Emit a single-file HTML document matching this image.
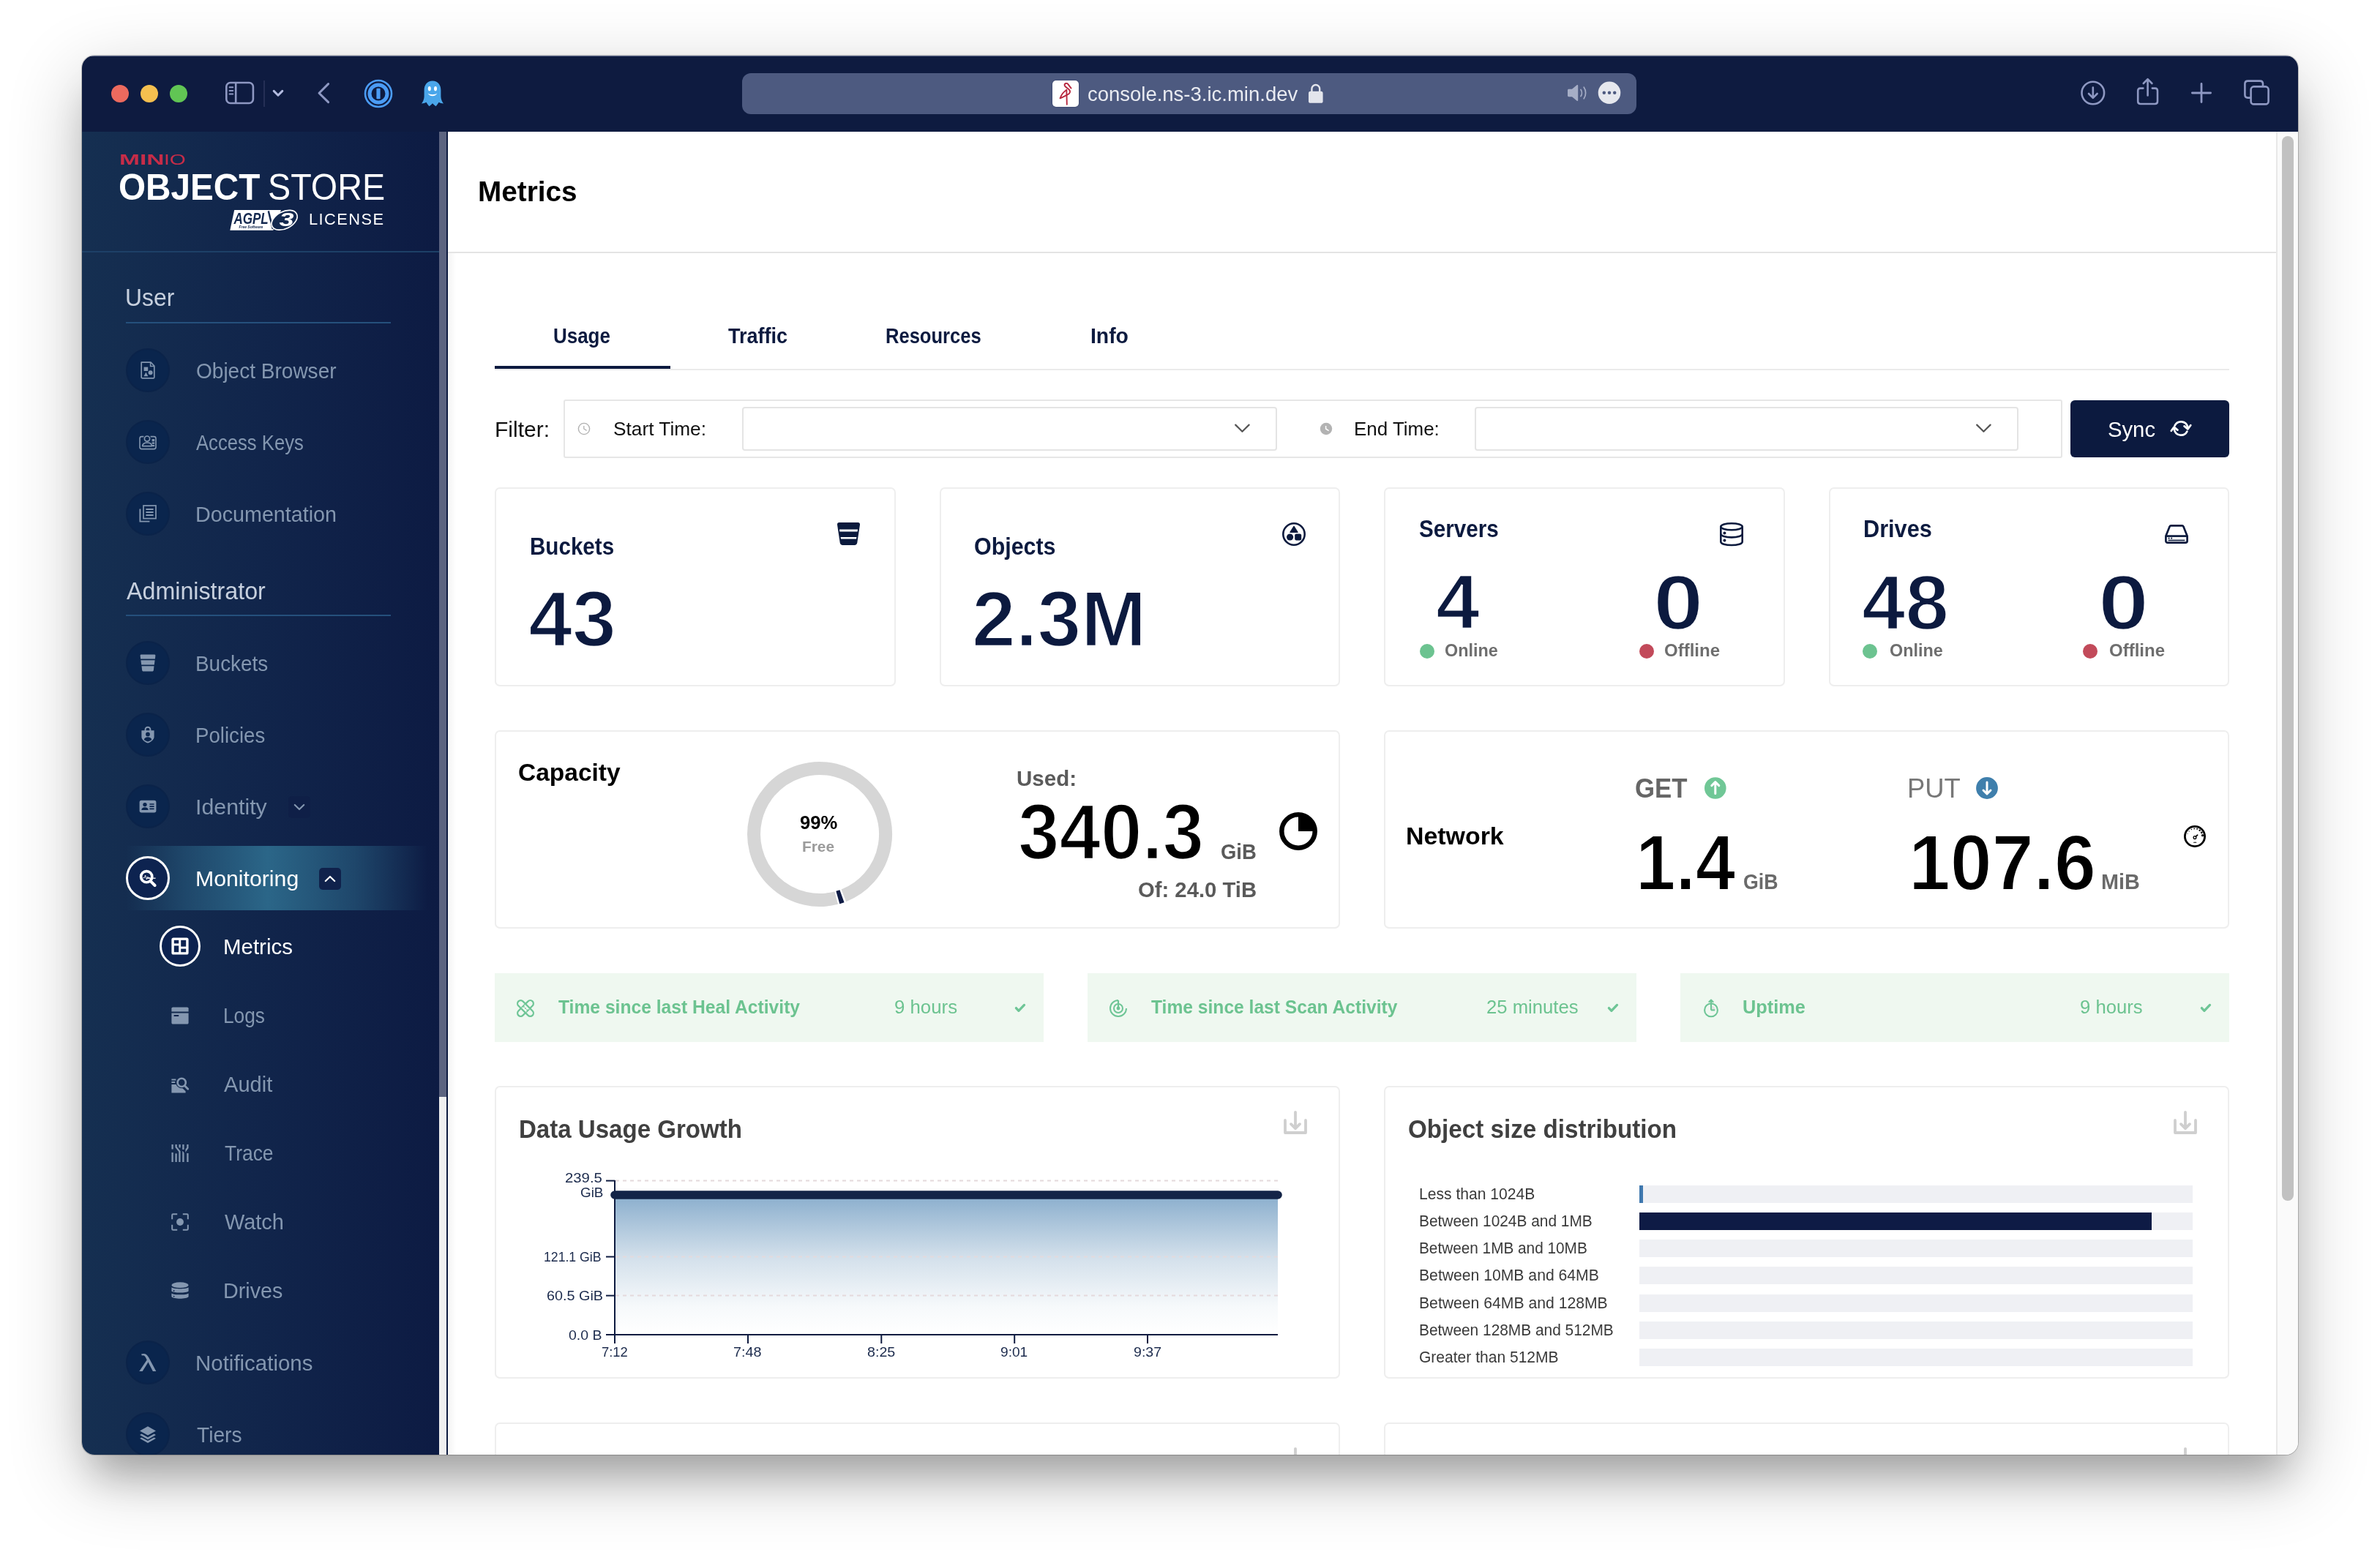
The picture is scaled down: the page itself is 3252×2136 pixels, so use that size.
<!DOCTYPE html>
<html lang="en"><head><meta charset="utf-8"><title>MinIO Console - Metrics</title>
<style>
html,body{margin:0;padding:0;background:#fff;}
body{width:3252px;height:2136px;position:relative;overflow:hidden;font-family:"Liberation Sans",sans-serif;}
.b{position:absolute;box-sizing:border-box;display:block;}
.t{position:absolute;white-space:nowrap;line-height:1em;height:1em;margin:0;padding:0;transform-origin:0 50%;}
#shadow{position:absolute;left:112px;top:76px;width:3028px;height:1912px;border-radius:17px;
 box-shadow:0 0 0 1px rgba(0,0,0,.2),0 30px 100px 0 rgba(0,0,0,.24),0 42px 52px -16px rgba(0,0,0,.22);background:#fff;}
#win{will-change:transform;position:absolute;left:0;top:0;width:3252px;height:2136px;clip-path:inset(76px 112px 148px 112px round 17px);background:#fff;}
svg{overflow:visible}
</style></head><body>
<div id="shadow"></div>
<div id="win">
<div class="b" style="left:112px;top:76px;width:3028px;height:104px;background:#0e1b40;"></div>
<div class="b" style="left:112px;top:76px;width:3028px;height:1px;background:rgba(200,208,235,.5);"></div>
<div class="b" style="left:152px;top:116px;width:24px;height:24px;background:#ec6a5e;border-radius:50%;"></div>
<div class="b" style="left:192px;top:116px;width:24px;height:24px;background:#f4bf4f;border-radius:50%;"></div>
<div class="b" style="left:232px;top:116px;width:24px;height:24px;background:#61c554;border-radius:50%;"></div>
<div class="b" style="left:1014px;top:100px;width:1222px;height:56px;background:#4d5a80;border-radius:12px;"></div>
<div class="b" style="left:1438px;top:110px;width:36px;height:36px;background:#fff;border-radius:5px;box-shadow:0 0 2px rgba(20,30,70,.6);"></div>
<div class="t" style="left:1485.90px;top:114.92px;font-size:27.50px;color:#e9ebf1;">console.ns-3.ic.min.dev</div>
<svg class="b" style="left:306px;top:108px;" width="44" height="38" viewBox="0 0 44 38"><g fill="none" stroke="#8e98c2" stroke-width="2.6" stroke-linecap="round"><rect x="3.3" y="5" width="36.6" height="28" rx="5.5"/><path d="M16.2 5.5V32.5"/><path d="M7.6 11.3h4.6M7.6 16h4.6M7.6 20.6h4.6" stroke-width="2"/></g></svg>
<div class="b" style="left:360px;top:110px;width:2px;height:36px;background:#252f55;"></div>
<svg class="b" style="left:370px;top:118px;" width="20" height="18" viewBox="0 0 20 18"><path d="M4.2 6.4L10 12.2L15.8 6.4" fill="none" stroke="#b3bbe0" stroke-width="3" stroke-linecap="round" stroke-linejoin="round"/></svg>
<svg class="b" style="left:430px;top:108px;" width="26" height="38" viewBox="0 0 26 38"><path d="M18.6 6.6L6 19.2L18.6 31.6" fill="none" stroke="#8e98c2" stroke-width="3" stroke-linecap="round" stroke-linejoin="round"/></svg>
<svg class="b" style="left:497px;top:108px;" width="40" height="40" viewBox="0 0 40 40"><g transform="translate(20,20)"><circle r="18" fill="none" stroke="#4b9cf5" stroke-width="2.6"/><circle r="12" fill="none" stroke="#4b9cf5" stroke-width="5"/><rect x="-2.6" y="-7.2" width="5.2" height="14.4" rx="1" fill="#4b9cf5"/></g></svg>
<svg class="b" style="left:574px;top:108px;" width="34" height="40" viewBox="0 0 34 40"><path d="M17 2.4C9.6 2.4 5.6 8 5.6 15.4V24C5.6 28 3.6 31.2 2 33.6C4.4 33.4 6.6 32.8 8.4 31.8C9.6 33.8 10.8 35.4 12.4 37.2C14 36 15.4 34.8 17 33.2C18.6 34.8 20 36 21.6 37.2C23.2 35.4 24.4 33.8 25.6 31.8C27.4 32.8 29.6 33.4 32 33.6C30.4 31.2 28.4 28 28.4 24V15.4C28.4 8 24.4 2.4 17 2.4Z" fill="#4aa6ea"/><ellipse cx="12.8" cy="13.2" rx="2" ry="3.1" fill="#fff"/><ellipse cx="21" cy="13.2" rx="2" ry="3.1" fill="#fff"/><path d="M10.6 19.6C12.6 24.4 21.4 24.4 23.4 19.6C20.6 21.8 13.4 21.8 10.6 19.6Z" fill="#fff"/></svg>
<svg class="b" style="left:1438px;top:110px;" width="36" height="36" viewBox="0 0 36 36"><g fill="none" stroke="#b7283f" stroke-width="1.9" stroke-linecap="round" stroke-linejoin="round"><path d="M25.6 10.6L21.2 4.9C19.8 3.1 16.4 3.9 16.6 6.3C16.8 8.4 20 10 22.6 12.2C25.2 14.6 24.4 18.2 20 19.6"/><path d="M19.3 13C15 15.5 12 20 10.5 24.3C13.6 23.1 16.6 21.4 19.6 19.8"/><path d="M19.3 12.8L19.8 32.8"/></g></svg>
<svg class="b" style="left:1786px;top:112px;" width="24" height="32" viewBox="0 0 24 32"><rect x="2" y="12.8" width="19.6" height="16" rx="2.6" fill="#e3e5ec"/><path d="M6.4 13.5V9.4a5.4 5.4 0 0 1 10.8 0V13.5" fill="none" stroke="#e3e5ec" stroke-width="2.4"/></svg>
<svg class="b" style="left:2140px;top:112px;" width="32" height="30" viewBox="0 0 32 30"><path d="M2 11.4C2 10.4 2.6 9.8 3.6 9.8H8L14.6 4.2C15.4 3.6 16.2 4 16.2 5V25C16.2 26 15.4 26.4 14.6 25.8L8 20.2H3.6C2.6 20.2 2 19.6 2 18.6Z" fill="#a6aec6"/><path d="M20 10.4C21.8 13 21.8 17 20 19.6" fill="none" stroke="#a6aec6" stroke-width="1.7" stroke-linecap="round"/><path d="M24.2 7.2C27.4 11.6 27.4 18.4 24.2 22.8" fill="none" stroke="#a6aec6" stroke-width="1.7" stroke-linecap="round"/></svg>
<svg class="b" style="left:2183px;top:111px;" width="32" height="32" viewBox="0 0 32 32"><circle cx="16" cy="15.7" r="15.3" fill="#e6e8ee"/><circle cx="8.8" cy="15.7" r="2.25" fill="#4d5a80"/><circle cx="16" cy="15.7" r="2.25" fill="#4d5a80"/><circle cx="23.2" cy="15.7" r="2.25" fill="#4d5a80"/></svg>
<svg class="b" style="left:2840px;top:108px;" width="40" height="40" viewBox="0 0 40 40"><g fill="none" stroke="#8e98c2" stroke-width="2.6" stroke-linecap="round" stroke-linejoin="round"><circle cx="19.8" cy="19" r="15.3"/><path d="M19.8 11.6V25.4M14 20L19.8 25.8L25.6 20"/></g></svg>
<svg class="b" style="left:2916px;top:104px;" width="38" height="44" viewBox="0 0 38 44"><g fill="none" stroke="#8e98c2" stroke-width="2.6" stroke-linecap="round" stroke-linejoin="round"><path d="M12.4 16.6H8.6C6.4 16.6 5.2 17.8 5.2 20V34.6C5.2 36.8 6.4 38 8.6 38H28.6C30.8 38 32 36.8 32 34.6V20C32 17.8 30.8 16.6 28.6 16.6H24.8"/><path d="M18.6 26.4V4.4M12.8 10L18.6 4.2L24.4 10"/></g></svg>
<svg class="b" style="left:2990px;top:110px;" width="36" height="36" viewBox="0 0 36 36"><path d="M18 4.4V29.6M5.4 17H30.6" fill="none" stroke="#8e98c2" stroke-width="2.8" stroke-linecap="round"/></svg>
<svg class="b" style="left:3062px;top:106px;" width="44" height="42" viewBox="0 0 44 42"><g fill="none" stroke="#8e98c2" stroke-width="2.6" stroke-linejoin="round"><path d="M13.6 27.6H9.4C7 27.6 5.4 26 5.4 23.6V8.6C5.4 6.2 7 4.6 9.4 4.6H26C28.4 4.6 30 6.2 30 8.6V12.4"/><rect x="13.6" y="12.4" width="24" height="24" rx="4"/></g></svg>
<div class="b" style="left:112px;top:180px;width:488px;height:1808px;background:linear-gradient(90deg,#152f51 0%,#11254b 50%,#0d1b43 100%);"></div>
<div class="b" style="left:112px;top:343px;width:488px;height:2px;background:#1d4067;"></div>
<div class="b" style="left:600px;top:180px;width:10px;height:1808px;background:#f0f0f0;"></div>
<div class="b" style="left:600px;top:180px;width:10px;height:1319px;background:#5c6480;"></div>
<div class="b" style="left:610px;top:180px;width:2px;height:1808px;background:#0e1b40;"></div>
<div class="t" style="left:163.42px;top:207.67px;font-size:20.00px;color:#c72c48;font-weight:700;transform:scaleX(1.6765);">MIN</div>
<div class="t" style="left:223.96px;top:207.67px;font-size:20.00px;color:#c72c48;transform:scaleX(1.4130);">IO</div>
<div class="t" style="left:162.49px;top:231.40px;font-size:49.50px;color:#fff;font-weight:700;transform:scaleX(0.9634);">OBJECT</div>
<div class="t" style="left:365.90px;top:231.40px;font-size:49.50px;color:#fff;transform:scaleX(0.9436);">STORE</div>
<div class="t" style="left:421.96px;top:288.55px;font-size:21.80px;color:#fff;letter-spacing:1.487px;">LICENSE</div>
<svg class="b" style="left:312px;top:284px;" width="96" height="34" viewBox="0 0 96 34"><path d="M8.2 3.1H72L61.2 30.8H2.3Z" fill="#fff"/><text x="7.4" y="22.3" font-family="Liberation Sans, sans-serif" font-style="italic" font-weight="700" font-size="22" fill="#14294f" textLength="47.4" lengthAdjust="spacingAndGlyphs">AGPL</text><text x="14.4" y="28.3" font-family="Liberation Sans, sans-serif" font-style="italic" font-weight="700" font-size="5.4" fill="#14294f" textLength="33" lengthAdjust="spacingAndGlyphs">Free Software</text><path d="M54.8 4.4L60.8 29" fill="none" stroke="#14294f" stroke-width="2.4"/><g transform="translate(76.6,16.8) rotate(-27)"><ellipse rx="18.8" ry="11.6" fill="#14294f" stroke="#fff" stroke-width="1.7"/></g><text x="69.4" y="25.4" font-family="Liberation Sans, sans-serif" font-style="italic" font-weight="700" font-size="25" fill="#fff" textLength="20" lengthAdjust="spacingAndGlyphs">3</text></svg>
<div class="t" style="left:170.61px;top:390.37px;font-size:33.00px;color:#c7d0de;transform:scaleX(0.9652);">User</div>
<div class="b" style="left:172px;top:440px;width:362px;height:2px;background:#25507c;"></div>
<div class="t" style="left:173.00px;top:790.77px;font-size:33.00px;color:#c7d0de;transform:scaleX(0.9766);">Administrator</div>
<div class="b" style="left:172px;top:840px;width:362px;height:2px;background:#25507c;"></div>
<div class="b" style="left:172px;top:476px;width:60px;height:60px;background:#0a254d;border:2px solid #0b2349;border-radius:50%;"></div>
<svg class="b" style="left:190px;top:494px;" width="24" height="24" viewBox="0 0 24 24"><path d="M3.2 1.2H16L20.8 6V21.4C20.8 22.2 20.2 22.8 19.4 22.8H4.6C3.8 22.8 3.2 22.2 3.2 21.4Z" fill="none" stroke="#8497b0" stroke-width="1.7" stroke-linejoin="round"/><path d="M15.6 1.6V6.4H20.4" fill="none" stroke="#8497b0" stroke-width="1.5"/><rect x="6.6" y="7.6" width="5.6" height="5.4" fill="#8497b0"/><circle cx="15.6" cy="15.2" r="3" fill="#8497b0"/><path d="M6.4 20.2L9.4 14.8L12.4 20.2Z" fill="#8497b0"/></svg>
<div class="t" style="left:268.24px;top:491.90px;font-size:30.00px;color:#8497b0;transform:scaleX(0.9341);">Object Browser</div>
<div class="b" style="left:172px;top:574px;width:60px;height:60px;background:#0a254d;border:2px solid #0b2349;border-radius:50%;"></div>
<svg class="b" style="left:190px;top:592px;" width="24" height="24" viewBox="0 0 24 24"><path d="M6.4 4.6H3.6C2 4.6 1 5.6 1 7.2V19C1 20.6 2 21.6 3.6 21.6H20.4C22 21.6 23 20.6 23 19V7.2C23 5.6 22 4.6 20.4 4.6H15.6" fill="none" stroke="#8497b0" stroke-width="1.6"/><circle cx="11" cy="7.6" r="3.6" fill="none" stroke="#8497b0" stroke-width="1.7"/><path d="M4.6 17.6C4.6 14.8 7.2 13 11 13C14.8 13 17.4 14.8 17.4 17.6Z" fill="none" stroke="#8497b0" stroke-width="1.6" stroke-linejoin="round"/><rect x="17.6" y="8" width="3.6" height="3.2" fill="#8497b0"/><rect x="17.6" y="12.4" width="3.6" height="2.4" fill="#8497b0"/><rect x="17.6" y="16" width="3.6" height="2.2" fill="#8497b0"/></svg>
<div class="t" style="left:268.20px;top:589.90px;font-size:30.00px;color:#8497b0;transform:scaleX(0.8553);">Access Keys</div>
<div class="b" style="left:172px;top:672px;width:60px;height:60px;background:#0a254d;border:2px solid #0b2349;border-radius:50%;"></div>
<svg class="b" style="left:190px;top:690px;" width="24" height="24" viewBox="0 0 24 24"><rect x="6" y="1" width="17" height="17.6" fill="none" stroke="#8497b0" stroke-width="1.7"/><path d="M9.4 6H19.6M9.4 10H19.6M9.4 14H19.6" stroke="#8497b0" stroke-width="1.8"/><path d="M1.4 5.6V22.6H14.4" fill="none" stroke="#8497b0" stroke-width="1.9"/></svg>
<div class="t" style="left:267.20px;top:687.90px;font-size:30.00px;color:#8497b0;transform:scaleX(0.9567);">Documentation</div>
<div class="b" style="left:172px;top:876px;width:60px;height:60px;background:#0a254d;border:2px solid #0b2349;border-radius:50%;"></div>
<svg class="b" style="left:190px;top:894px;" width="24" height="24" viewBox="0 0 24 24"><path d="M1.6 1.8C1.6 1 2.2 0.4 3 0.4H21C21.8 0.4 22.4 1 22.4 1.8L21.9 6.4H2.1Z" fill="#8497b0"/><path d="M2.4 8.2H21.6L20.8 14.4H3.2Z" fill="#8497b0"/><path d="M3.5 16.2H20.5L19.9 21.8C19.8 22.8 19 23.6 17.9 23.6H6.1C5 23.6 4.2 22.8 4.1 21.8Z" fill="#8497b0"/></svg>
<div class="t" style="left:267.27px;top:891.90px;font-size:30.00px;color:#8497b0;transform:scaleX(0.9302);">Buckets</div>
<div class="b" style="left:172px;top:974px;width:60px;height:60px;background:#0a254d;border:2px solid #0b2349;border-radius:50%;"></div>
<svg class="b" style="left:190px;top:992px;" width="24" height="24" viewBox="0 0 24 24"><path d="M12 0.8C14.6 0.8 16.4 2.6 16.4 5V6.2H20.6V15C20.6 19 16 22 12 23.6C8 22 3.4 19 3.4 15V6.2H7.6V5C7.6 2.6 9.4 0.8 12 0.8ZM9.6 6.2H14.4V5C14.4 3.6 13.4 2.8 12 2.8C10.6 2.8 9.6 3.6 9.6 5Z" fill="#8497b0"/><circle cx="12" cy="11.4" r="2.9" fill="#0a254d"/><path d="M6.8 19C7.2 16.4 9.2 15.2 12 15.2C14.8 15.2 16.8 16.4 17.2 19C15.6 20.2 13.8 21 12 21.6C10.2 21 8.4 20.2 6.8 19Z" fill="#0a254d"/></svg>
<div class="t" style="left:267.29px;top:989.90px;font-size:30.00px;color:#8497b0;transform:scaleX(0.9209);">Policies</div>
<div class="b" style="left:172px;top:1072px;width:60px;height:60px;background:#0a254d;border:2px solid #0b2349;border-radius:50%;"></div>
<svg class="b" style="left:190px;top:1090px;" width="24" height="24" viewBox="0 0 24 24"><rect x="0.6" y="3.8" width="22.8" height="16.6" rx="2.6" fill="#8497b0"/><circle cx="8" cy="9.6" r="2.7" fill="#0a254d"/><path d="M3.4 17C3.4 14.4 5.2 13.2 8 13.2C10.8 13.2 12.6 14.4 12.6 17Z" fill="#0a254d"/><path d="M14.4 9H20.6M14.4 12.2H20.6M14.4 15.4H20.6" stroke="#0a254d" stroke-width="1.7"/></svg>
<div class="t" style="left:266.77px;top:1087.90px;font-size:30.00px;color:#8497b0;transform:scaleX(1.0101);">Identity</div>
<div class="b" style="left:172px;top:1156px;width:412px;height:88px;background:linear-gradient(90deg,rgba(43,102,136,0) 0%,rgba(43,102,136,.5) 20%,rgba(43,102,136,1) 47%,rgba(43,102,136,.55) 76%,rgba(43,102,136,0) 100%);"></div>
<div class="b" style="left:172px;top:1170px;width:60px;height:60px;background:#0d2350;border:3px solid #fff;border-radius:50%;"></div>
<svg class="b" style="left:190px;top:1188px;" width="24" height="24" viewBox="0 0 24 24"><circle cx="10.2" cy="10.2" r="7.6" fill="none" stroke="#fff" stroke-width="3.6"/><path d="M15.4 15.8L21.6 22" stroke="#fff" stroke-width="4" stroke-linecap="round"/><path d="M11 12.2H22.6" stroke="#fff" stroke-width="1.3"/><path d="M5.4 11.6H7.4L8.6 8L10.4 14L11.8 10L12.6 11.6H15" fill="none" stroke="#fff" stroke-width="0.9"/></svg>
<div class="t" style="left:267.08px;top:1185.90px;font-size:30.00px;color:#fff;transform:scaleX(1.0081);">Monitoring</div>
<div class="b" style="left:172px;top:1832px;width:60px;height:60px;background:#0a254d;border:2px solid #0b2349;border-radius:50%;"></div>
<div class="t" style="left:190.26px;top:1846.69px;font-size:32.50px;color:#8497b0;transform:scaleX(1.4592);">λ</div>
<div class="t" style="left:267.14px;top:1847.90px;font-size:30.00px;color:#8497b0;transform:scaleX(0.9819);">Notifications</div>
<div class="b" style="left:172px;top:1930px;width:60px;height:60px;background:#0a254d;border:2px solid #0b2349;border-radius:50%;"></div>
<svg class="b" style="left:190px;top:1948px;" width="24" height="24" viewBox="0 0 24 24"><path d="M12 1.2L23 7.4L12 13.6L1 7.4Z" fill="#8497b0"/><path d="M3.6 11.6L1 13L12 19.2L23 13L20.4 11.6L12 16.2Z" fill="#8497b0"/><path d="M3.6 16.4L1 17.8L12 24L23 17.8L20.4 16.4L12 21Z" fill="#8497b0"/></svg>
<div class="t" style="left:268.94px;top:1945.90px;font-size:30.00px;color:#8497b0;transform:scaleX(0.9390);">Tiers</div>
<div class="b" style="left:394px;top:1088px;width:30px;height:30px;background:#0f1f47;border-radius:5px;"></div>
<svg class="b" style="left:394px;top:1088px;" width="30" height="30" viewBox="0 0 30 30"><path d="M8.8 12L15 18L21.2 12" fill="none" stroke="#8497b0" stroke-width="2.2" stroke-linecap="round" stroke-linejoin="round"/></svg>
<div class="b" style="left:436px;top:1186px;width:30px;height:30px;background:#10224c;border-radius:5px;"></div>
<svg class="b" style="left:436px;top:1186px;" width="30" height="30" viewBox="0 0 30 30"><path d="M8.8 18L15 12L21.2 18" fill="none" stroke="#fff" stroke-width="2.2" stroke-linecap="round" stroke-linejoin="round"/></svg>
<div class="b" style="left:218px;top:1265px;width:56px;height:56px;background:#0c2250;border:3px solid #fff;border-radius:50%;"></div>
<svg class="b" style="left:234px;top:1281px;" width="24" height="24" viewBox="0 0 24 24"><rect x="0.4" y="0.4" width="23.2" height="23.2" rx="2.6" fill="#fff"/><rect x="3.8" y="3.8" width="6.4" height="4.6" fill="#0c2250"/><rect x="3.8" y="11.4" width="6.4" height="8.8" fill="#0c2250"/><rect x="13.2" y="3.8" width="7" height="8.8" fill="#0c2250"/><rect x="13.2" y="15.6" width="7" height="4.6" fill="#0c2250"/></svg>
<div class="t" style="left:305.14px;top:1278.90px;font-size:30.00px;color:#fff;transform:scaleX(0.9823);">Metrics</div>
<svg class="b" style="left:234px;top:1376px;" width="24" height="24" viewBox="0 0 24 24"><path d="M0.4 2.2C0.4 1.2 1.2 0.4 2.2 0.4H21.8C22.8 0.4 23.6 1.2 23.6 2.2V6.6H0.4Z" fill="#8497b0"/><path d="M0.4 8.4H23.6V21.8C23.6 22.8 22.8 23.6 21.8 23.6H2.2C1.2 23.6 0.4 22.8 0.4 21.8Z" fill="#8497b0"/><rect x="3.6" y="11" width="6.6" height="2" fill="#10244c"/></svg>
<div class="t" style="left:305.40px;top:1372.90px;font-size:30.00px;color:#8497b0;transform:scaleX(0.8759);">Logs</div>
<svg class="b" style="left:234px;top:1470.5px;" width="24" height="24.0" viewBox="0 0 24 24.0"><path d="M0.4 3.4H6.4V5.4H0.4ZM0.4 7H5.2V9H0.4Z" fill="#8497b0"/><path d="M0.4 11H6.6C8 14.6 11.4 16.6 15.4 16.2L19.6 20.2V22.6H0.4Z" fill="#8497b0"/><circle cx="14.2" cy="8.4" r="5.6" fill="none" stroke="#8497b0" stroke-width="2.6"/><path d="M18.6 13L22.8 17.2" stroke="#8497b0" stroke-width="2.8" stroke-linecap="round"/></svg>
<div class="t" style="left:305.90px;top:1467.40px;font-size:30.00px;color:#8497b0;transform:scaleX(0.9692);">Audit</div>
<svg class="b" style="left:234px;top:1564px;" width="24" height="24" viewBox="0 0 24 24"><g fill="none" stroke="#8497b0" stroke-width="2.3"><path d="M1.6 0V6.4M1.6 11V24"/><path d="M6.6 0V3.6L11.4 9.6V24"/><path d="M6.6 12.4V24"/><path d="M11.6 0V4.4"/><path d="M16.4 0V6.2L16.4 24" /><path d="M22.4 0V4.6L18.4 10"/><path d="M22.4 12V24"/></g><path d="M13.4 7L19.4 7L19.4 13Z" fill="#10244c" stroke="none"/></svg>
<div class="t" style="left:306.97px;top:1560.90px;font-size:30.00px;color:#8497b0;transform:scaleX(0.8808);">Trace</div>
<svg class="b" style="left:234px;top:1658px;" width="24" height="24" viewBox="0 0 24 24"><g fill="none" stroke="#8497b0" stroke-width="2"><path d="M1.2 8.2V2.6C1.2 1.8 1.8 1.2 2.6 1.2H8.2M15.8 1.2H21.4C22.2 1.2 22.8 1.8 22.8 2.6V8.2M22.8 15.8V21.4C22.8 22.2 22.2 22.8 21.4 22.8H15.8M8.2 22.8H2.6C1.8 22.8 1.2 22.2 1.2 21.4V15.8"/></g><circle cx="12" cy="12" r="4.9" fill="#8497b0"/></svg>
<div class="t" style="left:307.36px;top:1654.90px;font-size:30.00px;color:#8497b0;transform:scaleX(0.9646);">Watch</div>
<svg class="b" style="left:234px;top:1752px;" width="24" height="24" viewBox="0 0 24 24"><ellipse cx="12" cy="4.2" rx="11.6" ry="3.9" fill="#8497b0"/><path d="M0.4 7.2C3 9.8 21 9.8 23.6 7.2V12.4C21 15.2 3 15.2 0.4 12.4Z" fill="#8497b0"/><path d="M0.4 15.4C3 18 21 18 23.6 15.4V20C21 23.6 3 23.6 0.4 20Z" fill="#8497b0"/><circle cx="3.6" cy="12" r="0.9" fill="#10244c"/><circle cx="3.6" cy="19.6" r="0.9" fill="#10244c"/></svg>
<div class="t" style="left:305.21px;top:1748.90px;font-size:30.00px;color:#8497b0;transform:scaleX(0.9559);">Drives</div>
<div class="b" style="left:612px;top:180px;width:2498px;height:1808px;background:#fff;"></div>
<div class="b" style="left:3110px;top:180px;width:30px;height:1808px;background:#fafafa;border-left:2px solid #e8e8e8;"></div>
<div class="b" style="left:3118px;top:186px;width:16px;height:1455px;background:#c1c1c1;border-radius:8px;"></div>
<div class="t" style="left:653.28px;top:243.03px;font-size:38.00px;color:#000;font-weight:700;transform:scaleX(1.0185);">Metrics</div>
<div class="b" style="left:612px;top:344px;width:2498px;height:2px;background:#e4e4e4;"></div>
<div class="b" style="left:612px;top:346px;width:12px;height:1642px;background:linear-gradient(90deg,rgba(0,0,0,.045),rgba(0,0,0,0));"></div>
<div class="b" style="left:676px;top:504px;width:2370px;height:2px;background:#ebebeb;"></div>
<div class="b" style="left:676px;top:500px;width:240px;height:4px;background:#0c1a3f;"></div>
<div class="t" style="left:756.19px;top:443.61px;font-size:30.00px;color:#0c1a3f;font-weight:700;transform:scaleX(0.8648);">Usage</div>
<div class="t" style="left:995.03px;top:443.61px;font-size:30.00px;color:#0c1a3f;font-weight:700;transform:scaleX(0.9009);">Traffic</div>
<div class="t" style="left:1209.94px;top:443.61px;font-size:30.00px;color:#0c1a3f;font-weight:700;transform:scaleX(0.8516);">Resources</div>
<div class="t" style="left:1489.66px;top:443.61px;font-size:30.00px;color:#0c1a3f;font-weight:700;transform:scaleX(0.9441);">Info</div>
<div class="t" style="left:675.60px;top:571.77px;font-size:29.80px;color:#111;transform:scaleX(1.0082);">Filter:</div>
<div class="b" style="left:770px;top:546px;width:2048px;height:80px;border:2px solid #e6e6e6;border-radius:3px;"></div>
<div class="t" style="left:837.82px;top:573.61px;font-size:25.50px;color:#111;transform:scaleX(1.0305);">Start Time:</div>
<div class="b" style="left:1014px;top:556px;width:731px;height:60px;border:2px solid #e4e4e4;border-radius:4px;"></div>
<div class="t" style="left:1849.92px;top:573.61px;font-size:25.50px;color:#111;transform:scaleX(1.0177);">End Time:</div>
<div class="b" style="left:2015px;top:556px;width:743px;height:60px;border:2px solid #e4e4e4;border-radius:4px;"></div>
<div class="b" style="left:2829px;top:547px;width:217px;height:78px;background:#0c1a3f;border-radius:6px;"></div>
<div class="t" style="left:2880.18px;top:572.03px;font-size:29.50px;color:#fff;transform:scaleX(0.9910);">Sync</div>
<div class="b" style="left:676px;top:666px;width:548px;height:272px;border:2px solid #eeeeee;border-radius:7px;background:#fff;"></div>
<div class="b" style="left:1284px;top:666px;width:547px;height:272px;border:2px solid #eeeeee;border-radius:7px;background:#fff;"></div>
<div class="b" style="left:1891px;top:666px;width:548px;height:272px;border:2px solid #eeeeee;border-radius:7px;background:#fff;"></div>
<div class="b" style="left:2499px;top:666px;width:547px;height:272px;border:2px solid #eeeeee;border-radius:7px;background:#fff;"></div>
<div class="t" style="left:723.68px;top:729.64px;font-size:33.50px;color:#0c1a3f;font-weight:700;transform:scaleX(0.8833);">Buckets</div>
<div class="t" style="left:722.18px;top:792.60px;font-size:107.50px;color:#0c1a3f;font-weight:700;-webkit-text-stroke:2.4px #fff;">43</div>
<div class="t" style="left:1331.28px;top:729.64px;font-size:33.50px;color:#0c1a3f;font-weight:700;transform:scaleX(0.9076);">Objects</div>
<div class="t" style="left:1328.05px;top:792.60px;font-size:107.50px;color:#0c1a3f;font-weight:700;transform:scaleX(0.9978);-webkit-text-stroke:2.4px #fff;">2.3M</div>
<div class="t" style="left:1938.81px;top:705.84px;font-size:33.50px;color:#0c1a3f;font-weight:700;transform:scaleX(0.8839);">Servers</div>
<div class="t" style="left:2545.51px;top:705.84px;font-size:33.50px;color:#0c1a3f;font-weight:700;transform:scaleX(0.9158);">Drives</div>
<div class="t" style="left:1962.16px;top:769.27px;font-size:106.00px;color:#0c1a3f;font-weight:700;transform:scaleX(1.0164);-webkit-text-stroke:2.4px #fff;">4</div>
<div class="t" style="left:2259.09px;top:769.87px;font-size:106.00px;color:#0c1a3f;font-weight:700;transform:scaleX(1.1595);-webkit-text-stroke:2.4px #fff;">0</div>
<div class="t" style="left:2544.39px;top:769.87px;font-size:106.00px;color:#0c1a3f;font-weight:700;transform:scaleX(1.0082);-webkit-text-stroke:2.4px #fff;">48</div>
<div class="t" style="left:2866.92px;top:769.87px;font-size:106.00px;color:#0c1a3f;font-weight:700;transform:scaleX(1.1721);-webkit-text-stroke:2.4px #fff;">0</div>
<div class="b" style="left:1939.6px;top:880px;width:20.0px;height:20px;background:#6cc390;border-radius:50%;"></div>
<div class="t" style="left:1974.07px;top:877.26px;font-size:24.50px;color:#6e6e6e;font-weight:700;transform:scaleX(0.9533);">Online</div>
<div class="b" style="left:2239.5px;top:880px;width:20.0px;height:20px;background:#c24a5a;border-radius:50%;"></div>
<div class="t" style="left:2274.24px;top:877.26px;font-size:24.50px;color:#6e6e6e;font-weight:700;transform:scaleX(0.9799);">Offline</div>
<div class="b" style="left:2545.4px;top:880px;width:20.0px;height:20px;background:#6cc390;border-radius:50%;"></div>
<div class="t" style="left:2581.77px;top:877.26px;font-size:24.50px;color:#6e6e6e;font-weight:700;transform:scaleX(0.9533);">Online</div>
<div class="b" style="left:2845.8px;top:880px;width:20.0px;height:20px;background:#c24a5a;border-radius:50%;"></div>
<div class="t" style="left:2881.64px;top:877.26px;font-size:24.50px;color:#6e6e6e;font-weight:700;transform:scaleX(0.9799);">Offline</div>
<div class="b" style="left:676px;top:998px;width:1155px;height:271px;border:2px solid #eeeeee;border-radius:7px;background:#fff;"></div>
<div class="b" style="left:1891px;top:998px;width:1155px;height:271px;border:2px solid #eeeeee;border-radius:7px;background:#fff;"></div>
<div class="t" style="left:707.66px;top:1037.72px;font-size:34.00px;color:#000;font-weight:700;transform:scaleX(0.9852);">Capacity</div>
<div class="t" style="left:1092.85px;top:1110.99px;font-size:26.00px;color:#000;font-weight:700;transform:scaleX(0.9853);">99%</div>
<div class="t" style="left:1096.25px;top:1147.45px;font-size:20.50px;color:#9b9b9b;font-weight:700;transform:scaleX(1.0168);">Free</div>
<div class="t" style="left:1388.73px;top:1050.15px;font-size:29.00px;color:#5a5a5a;font-weight:700;transform:scaleX(1.0181);">Used:</div>
<div class="t" style="left:1391.44px;top:1083.70px;font-size:107.50px;color:#000;font-weight:700;transform:scaleX(0.9445);-webkit-text-stroke:2.6px #fff;">340.3</div>
<div class="t" style="left:1668.40px;top:1150.05px;font-size:29.00px;color:#5a5a5a;font-weight:700;transform:scaleX(0.9460);">GiB</div>
<div class="t" style="left:1555.23px;top:1201.95px;font-size:29.00px;color:#5a5a5a;font-weight:700;transform:scaleX(1.0089);">Of: 24.0 TiB</div>
<div class="t" style="left:1921.30px;top:1125.22px;font-size:34.00px;color:#000;font-weight:700;transform:scaleX(0.9968);">Network</div>
<div class="t" style="left:2234.11px;top:1059.53px;font-size:36.00px;color:#666;font-weight:700;transform:scaleX(0.9656);">GET</div>
<div class="t" style="left:2605.59px;top:1059.53px;font-size:36.00px;color:#777;transform:scaleX(1.0117);">PUT</div>
<div class="t" style="left:2235.19px;top:1126.02px;font-size:107.00px;color:#000;font-weight:700;transform:scaleX(0.9172);-webkit-text-stroke:2.0px #fff;">1.4</div>
<div class="t" style="left:2381.93px;top:1191.05px;font-size:29.00px;color:#6a6a6a;font-weight:700;transform:scaleX(0.9216);">GiB</div>
<div class="t" style="left:2607.91px;top:1126.02px;font-size:107.00px;color:#000;font-weight:700;transform:scaleX(0.9556);-webkit-text-stroke:2.0px #fff;">107.6</div>
<div class="t" style="left:2870.83px;top:1191.05px;font-size:29.00px;color:#6a6a6a;font-weight:700;transform:scaleX(0.9935);">MiB</div>
<div class="b" style="left:676px;top:1330px;width:750px;height:94px;background:#eff8f0;"></div>
<div class="b" style="left:1486px;top:1330px;width:750px;height:94px;background:#eff8f0;"></div>
<div class="b" style="left:2296px;top:1330px;width:750px;height:94px;background:#eff8f0;"></div>
<div class="t" style="left:762.75px;top:1363.91px;font-size:25.50px;color:#6cc390;font-weight:700;transform:scaleX(0.9663);">Time since last Heal Activity</div>
<div class="t" style="left:1221.54px;top:1363.91px;font-size:25.50px;color:#6cc390;transform:scaleX(1.0120);">9 hours</div>
<div class="t" style="left:1572.75px;top:1363.91px;font-size:25.50px;color:#6cc390;font-weight:700;transform:scaleX(0.9650);">Time since last Scan Activity</div>
<div class="t" style="left:2031.42px;top:1363.91px;font-size:25.50px;color:#6cc390;transform:scaleX(1.0071);">25 minutes</div>
<div class="t" style="left:2380.68px;top:1363.91px;font-size:25.50px;color:#6cc390;font-weight:700;transform:scaleX(0.9935);">Uptime</div>
<div class="t" style="left:2841.54px;top:1363.91px;font-size:25.50px;color:#6cc390;transform:scaleX(1.0072);">9 hours</div>
<div class="b" style="left:676px;top:1484px;width:1155px;height:400px;border:2px solid #eeeeee;border-radius:7px;background:#fff;"></div>
<div class="b" style="left:1891px;top:1484px;width:1155px;height:400px;border:2px solid #eeeeee;border-radius:7px;background:#fff;"></div>
<div class="b" style="left:676px;top:1944px;width:1155px;height:156px;border:2px solid #eeeeee;border-radius:7px;background:#fff;"></div>
<div class="b" style="left:1891px;top:1944px;width:1155px;height:156px;border:2px solid #eeeeee;border-radius:7px;background:#fff;"></div>
<div class="t" style="left:708.85px;top:1525.50px;font-size:34.50px;color:#404040;font-weight:700;transform:scaleX(0.9581);">Data Usage Growth</div>
<div class="t" style="left:1924.37px;top:1525.50px;font-size:34.50px;color:#404040;font-weight:700;transform:scaleX(0.9623);">Object size distribution</div>
<div class="t" style="left:1938.81px;top:1620.58px;font-size:22.00px;color:#3a3a3a;transform:scaleX(0.9584);">Less than 1024B</div>
<div class="b" style="left:2240px;top:1620px;width:756px;height:24px;background:#eff0f4;"></div>
<div class="t" style="left:1938.83px;top:1657.83px;font-size:22.00px;color:#3a3a3a;transform:scaleX(0.9488);">Between 1024B and 1MB</div>
<div class="b" style="left:2240px;top:1657px;width:756px;height:24px;background:#eff0f4;"></div>
<div class="t" style="left:1938.84px;top:1695.08px;font-size:22.00px;color:#3a3a3a;transform:scaleX(0.9440);">Between 1MB and 10MB</div>
<div class="b" style="left:2240px;top:1694px;width:756px;height:24px;background:#eff0f4;"></div>
<div class="t" style="left:1938.81px;top:1732.33px;font-size:22.00px;color:#3a3a3a;transform:scaleX(0.9617);">Between 10MB and 64MB</div>
<div class="b" style="left:2240px;top:1731px;width:756px;height:24px;background:#eff0f4;"></div>
<div class="t" style="left:1938.81px;top:1769.58px;font-size:22.00px;color:#3a3a3a;transform:scaleX(0.9623);">Between 64MB and 128MB</div>
<div class="b" style="left:2240px;top:1769px;width:756px;height:24px;background:#eff0f4;"></div>
<div class="t" style="left:1938.83px;top:1806.83px;font-size:22.00px;color:#3a3a3a;transform:scaleX(0.9488);">Between 128MB and 512MB</div>
<div class="b" style="left:2240px;top:1806px;width:756px;height:24px;background:#eff0f4;"></div>
<div class="t" style="left:1939.45px;top:1844.08px;font-size:22.00px;color:#3a3a3a;transform:scaleX(0.9563);">Greater than 512MB</div>
<div class="b" style="left:2240px;top:1843px;width:756px;height:24px;background:#eff0f4;"></div>
<div class="b" style="left:2240px;top:1620px;width:5px;height:24px;background:#3f78ae;"></div>
<div class="b" style="left:2240px;top:1657px;width:700px;height:24px;background:#0e1b45;"></div>
<svg class="b" style="left:1144px;top:714px;" width="31" height="31" viewBox="0 0 31 31"><path d="M2.6 0H28.4C30 0 31.2 1.3 31 2.9L27.3 27.6C27 29.6 25.6 31 23.6 31H7.4C5.4 31 4 29.6 3.7 27.6L0 2.9C-0.2 1.3 1 0 2.6 0Z" fill="#0b1a3d"/><path d="M3 9.6H28L27.6 12.4H3.4Z" fill="#fff"/><path d="M4.6 20H26.4L26 22.6H5Z" fill="#fff"/></svg>
<svg class="b" style="left:1752px;top:714px;" width="32" height="32" viewBox="0 0 32 32"><circle cx="16" cy="16" r="14.7" fill="none" stroke="#0b1a3d" stroke-width="2.6"/><path d="M16 5.4L21 13.4H11Z" fill="#0b1a3d" stroke="#0b1a3d" stroke-width="1.4" stroke-linejoin="round"/><circle cx="10.6" cy="20" r="4.6" fill="#0b1a3d"/><rect x="17.2" y="15.4" width="9" height="9" rx="2.2" fill="#0b1a3d"/></svg>
<svg class="b" style="left:2350px;top:714px;" width="32" height="32" viewBox="0 0 32 32"><g fill="none" stroke="#0b1a3d" stroke-width="2.6"><ellipse cx="16" cy="5.8" rx="14.7" ry="4.5"/><path d="M1.3 5.8V26.4C1.3 29 7.6 31 16 31C24.4 31 30.7 29 30.7 26.4V5.8"/><path d="M1.3 15.6C1.3 18.4 7.6 20.4 16 20.4C24.4 20.4 30.7 18.4 30.7 15.6"/></g><circle cx="6.4" cy="14.4" r="2" fill="#0b1a3d"/><circle cx="6.4" cy="24.4" r="2" fill="#0b1a3d"/></svg>
<svg class="b" style="left:2958px;top:717px;" width="32" height="26" viewBox="0 0 32 26"><g fill="none" stroke="#0b1a3d" stroke-width="2.7" stroke-linejoin="round"><path d="M1.4 15.4L6.6 2.6C6.9 1.8 7.6 1.4 8.4 1.4H23.6C24.4 1.4 25.1 1.8 25.4 2.6L30.6 15.4V22.2C30.6 23.6 29.6 24.6 28.2 24.6H3.8C2.4 24.6 1.4 23.6 1.4 22.2Z"/><path d="M1.4 15.6H30.6"/></g><path d="M4.6 21.4H27.4" stroke="#0b1a3d" stroke-width="1.6"/><circle cx="5.6" cy="18.6" r="1.1" fill="#0b1a3d"/><circle cx="9.2" cy="18.6" r="1.1" fill="#0b1a3d"/></svg>
<svg class="b" style="left:1748px;top:1110px;" width="52" height="52" viewBox="0 0 52 52"><circle cx="26" cy="26" r="22.7" fill="none" stroke="#000" stroke-width="6.5"/><path d="M26 26V3.2A22.8 22.8 0 0 1 48.8 26Z" fill="#000"/></svg>
<svg class="b" style="left:2329px;top:1062px;" width="30" height="30" viewBox="0 0 30 30"><circle cx="14.8" cy="15" r="14.8" fill="#70c796"/><path d="M14.8 22.6V7.2M9.8 11.6L14.8 6.6L19.8 11.6" fill="none" stroke="#fff" stroke-width="3" stroke-linecap="round" stroke-linejoin="round"/></svg>
<svg class="b" style="left:2700px;top:1062px;" width="30" height="30" viewBox="0 0 30 30"><circle cx="15" cy="15" r="14.9" fill="#3f7fac"/><path d="M15 7V22M10 18L15 23L20 18" fill="none" stroke="#fff" stroke-width="3" stroke-linecap="round" stroke-linejoin="round"/></svg>
<svg class="b" style="left:2984px;top:1128px;" width="30" height="30" viewBox="0 0 30 30"><circle cx="15" cy="15" r="13.6" fill="none" stroke="#000" stroke-width="2.8"/><circle cx="5.04" cy="11.37" r="0.5" fill="#000"/><circle cx="7.12" cy="7.91" r="0.6" fill="#000"/><circle cx="10.35" cy="5.47" r="0.75" fill="#000"/><circle cx="14.26" cy="4.43" r="0.9" fill="#000"/><circle cx="18.10" cy="4.86" r="1.0" fill="#000"/><circle cx="21.67" cy="6.76" r="1.2" fill="#000"/><circle cx="24.27" cy="9.86" r="1.4" fill="#000"/><circle cx="25.52" cy="13.71" r="1.6" fill="#000"/><circle cx="15" cy="16.6" r="1.9" fill="none" stroke="#000" stroke-width="1.3"/><path d="M16.2 15.4L18.6 13.2" stroke="#000" stroke-width="1.8" stroke-linecap="round"/><path d="M13.6 23.2H16.8" stroke="#000" stroke-width="1.1" stroke-linecap="round"/></svg>
<svg class="b" style="left:706px;top:1366px;" width="24" height="24" viewBox="0 0 24 24"><g stroke="#6ec596" stroke-width="2.2"><rect x="-4.3" y="-13.6" width="8.6" height="27.2" rx="4.3" fill="none" transform="translate(12,12) rotate(45)"/><rect x="-4.3" y="-13.6" width="8.6" height="27.2" rx="4.3" fill="#eff8f0" transform="translate(12,12) rotate(-45)"/><path d="M6.6 10.9L10.9 6.6M13.1 17.4L17.4 13.1" fill="none" stroke-width="1.5"/></g><circle cx="9.9" cy="9.9" r="0.95" fill="#6ec596"/><circle cx="12" cy="12" r="0.95" fill="#6ec596"/><circle cx="14.1" cy="14.1" r="0.95" fill="#6ec596"/></svg>
<svg class="b" style="left:1516px;top:1366px;" width="24" height="24" viewBox="0 0 24 24"><g fill="none" stroke="#6ec596" stroke-width="2"><path d="M12 1A11 11 0 1 0 23 12"/><circle cx="12" cy="12" r="6"/><path d="M12 1V12" stroke-width="2.2"/></g><circle cx="12" cy="12" r="2.4" fill="#6ec596"/></svg>
<svg class="b" style="left:2326px;top:1364px;" width="24" height="28" viewBox="0 0 24 28"><path d="M12 16.4V10.6A5.8 5.8 0 0 1 17.8 16.4Z" fill="#e2e2e2"/><g fill="none" stroke="#6ec596" stroke-width="2.1"><circle cx="12" cy="16.4" r="8.9"/><path d="M12 16.4V3M8.8 5.8L12 2.6L15.2 5.8" stroke-linejoin="round"/><path d="M12 16.4H17.2"/></g></svg>
<svg class="b" style="left:1384px;top:1368px;" width="22" height="18" viewBox="0 0 22 18"><path d="M4.4 9.6L7.9 13.3L15.5 5.4" fill="none" stroke="#6ec596" stroke-width="3.3" stroke-linecap="round" stroke-linejoin="round"/></svg>
<svg class="b" style="left:2194px;top:1368px;" width="22" height="18" viewBox="0 0 22 18"><path d="M4.4 9.6L7.9 13.3L15.5 5.4" fill="none" stroke="#6ec596" stroke-width="3.3" stroke-linecap="round" stroke-linejoin="round"/></svg>
<svg class="b" style="left:3004px;top:1368px;" width="22" height="18" viewBox="0 0 22 18"><path d="M4.4 9.6L7.9 13.3L15.5 5.4" fill="none" stroke="#6ec596" stroke-width="3.3" stroke-linecap="round" stroke-linejoin="round"/></svg>
<svg class="b" style="left:1753px;top:1516px;" width="34" height="36" viewBox="0 0 34 36"><g fill="none" stroke="#cfcfcf" stroke-width="3.8" stroke-linecap="round" stroke-linejoin="round"><path d="M3 15V32H31V15"/><path d="M17 3.8V25.6M11 20.2L17 26.2L23 20.2"/></g></svg>
<svg class="b" style="left:1753px;top:1976px;" width="34" height="36" viewBox="0 0 34 36"><path d="M17 3.8V25.6" fill="none" stroke="#cfcfcf" stroke-width="3.8" stroke-linecap="round"/></svg>
<svg class="b" style="left:2969px;top:1516px;" width="34" height="36" viewBox="0 0 34 36"><g fill="none" stroke="#cfcfcf" stroke-width="3.8" stroke-linecap="round" stroke-linejoin="round"><path d="M3 15V32H31V15"/><path d="M17 3.8V25.6M11 20.2L17 26.2L23 20.2"/></g></svg>
<svg class="b" style="left:2969px;top:1976px;" width="34" height="36" viewBox="0 0 34 36"><path d="M17 3.8V25.6" fill="none" stroke="#cfcfcf" stroke-width="3.8" stroke-linecap="round"/></svg>
<svg class="b" style="left:788px;top:576px;" width="20" height="20" viewBox="0 0 20 20"><circle cx="10" cy="10" r="7.6" fill="none" stroke="#b1b1b1" stroke-width="1.4"/><path d="M9.8 6V10L13.6 12.4" fill="none" stroke="#b1b1b1" stroke-width="1.3"/></svg>
<svg class="b" style="left:1802px;top:576px;" width="20" height="20" viewBox="0 0 20 20"><circle cx="10" cy="10" r="8.2" fill="#b3b3b3"/><path d="M9.6 6V10L13.6 12.6" fill="none" stroke="#fff" stroke-width="1.5"/></svg>
<svg class="b" style="left:1686px;top:576px;" width="24" height="20" viewBox="0 0 24 20"><path d="M2.2 4.6L11.4 13.8L20.6 4.6" fill="none" stroke="#555" stroke-width="2.2" stroke-linecap="round" stroke-linejoin="round"/></svg>
<svg class="b" style="left:2699px;top:576px;" width="24" height="20" viewBox="0 0 24 20"><path d="M2.2 4.6L11.4 13.8L20.6 4.6" fill="none" stroke="#555" stroke-width="2.2" stroke-linecap="round" stroke-linejoin="round"/></svg>
<svg class="b" style="left:2965px;top:572px;" width="30" height="26" viewBox="0 0 30 26"><g fill="none" stroke="#fff" stroke-width="2.7" stroke-linecap="round" stroke-linejoin="round"><path d="M6.6 9.6A9.4 9.4 0 0 1 24.2 11.6"/><path d="M19.6 10.4L24.4 14.4L28.2 9.2"/><path d="M23.4 17.6A9.4 9.4 0 0 1 5.8 14.6"/><path d="M10.4 15.6L5.6 11.6L1.8 16.8"/></g></svg>
<svg class="b" style="left:1020px;top:1040px;" width="200" height="200" viewBox="0 0 200 200"><path d="M122.69 187.09A90 90 0 1 1 132.84 183.80" fill="none" stroke="#d6d6d6" stroke-width="18"/><path d="M130.49 184.68A90 90 0 0 1 124.81 186.51" fill="none" stroke="#0e1b45" stroke-width="18"/></svg>
<svg class="b" style="left:700px;top:1500px;" width="1100" height="370" viewBox="0 0 1100 370"><defs><linearGradient id="ag" x1="0" y1="0" x2="0" y2="1"><stop offset="0" stop-color="#8aaecd"/><stop offset="0.45" stop-color="#d3e0eb"/><stop offset="0.8" stop-color="#f6f9fb"/><stop offset="1" stop-color="#ffffff"/></linearGradient></defs><rect x="141" y="133" width="905" height="190" fill="url(#ag)"/><path d="M141 113.6H1046" stroke="#e4d9dc" stroke-width="2" stroke-dasharray="5 5" fill="none"/><path d="M141 217.5H1046" stroke="#e4d9dc" stroke-width="2" stroke-dasharray="5 5" fill="none"/><path d="M141 270.6H1046" stroke="#e4d9dc" stroke-width="2" stroke-dasharray="5 5" fill="none"/><path d="M140 113V336" stroke="#0e1b40" stroke-width="2"/><path d="M128 324H1046" stroke="#0e1b40" stroke-width="2"/><path d="M128 113.6H140" stroke="#0e1b40" stroke-width="2"/><path d="M128 217.5H140" stroke="#0e1b40" stroke-width="2"/><path d="M128 270.6H140" stroke="#0e1b40" stroke-width="2"/><path d="M322 324V336" stroke="#0e1b40" stroke-width="2"/><path d="M504.3 324V336" stroke="#0e1b40" stroke-width="2"/><path d="M686.2 324V336" stroke="#0e1b40" stroke-width="2"/><path d="M868 324V336" stroke="#0e1b40" stroke-width="2"/><path d="M140 133H1046" stroke="#132447" stroke-width="11.6" stroke-linecap="round"/></svg>
<div class="t" style="left:771.68px;top:1601.26px;font-size:18.60px;color:#1b2a4c;transform:scaleX(1.0931);">239.5</div>
<div class="t" style="left:792.56px;top:1620.56px;font-size:18.60px;color:#1b2a4c;transform:scaleX(1.0134);">GiB</div>
<div class="t" style="left:743.38px;top:1708.96px;font-size:18.60px;color:#1b2a4c;transform:scaleX(0.9496);">121.1 GiB</div>
<div class="t" style="left:746.81px;top:1762.36px;font-size:18.60px;color:#1b2a4c;transform:scaleX(1.0639);">60.5 GiB</div>
<div class="t" style="left:777.22px;top:1815.76px;font-size:18.60px;color:#1b2a4c;transform:scaleX(1.0465);">0.0 B</div>
<div class="t" style="left:821.58px;top:1839.06px;font-size:18.60px;color:#1b2a4c;transform:scaleX(0.9908);">7:12</div>
<div class="t" style="left:1002.16px;top:1839.06px;font-size:18.60px;color:#1b2a4c;transform:scaleX(1.0637);">7:48</div>
<div class="t" style="left:1184.86px;top:1839.06px;font-size:18.60px;color:#1b2a4c;transform:scaleX(1.0580);">8:25</div>
<div class="t" style="left:1367.39px;top:1839.06px;font-size:18.60px;color:#1b2a4c;transform:scaleX(1.0289);">9:01</div>
<div class="t" style="left:1549.02px;top:1839.06px;font-size:18.60px;color:#1b2a4c;transform:scaleX(1.0520);">9:37</div>
</div>
</body></html>
